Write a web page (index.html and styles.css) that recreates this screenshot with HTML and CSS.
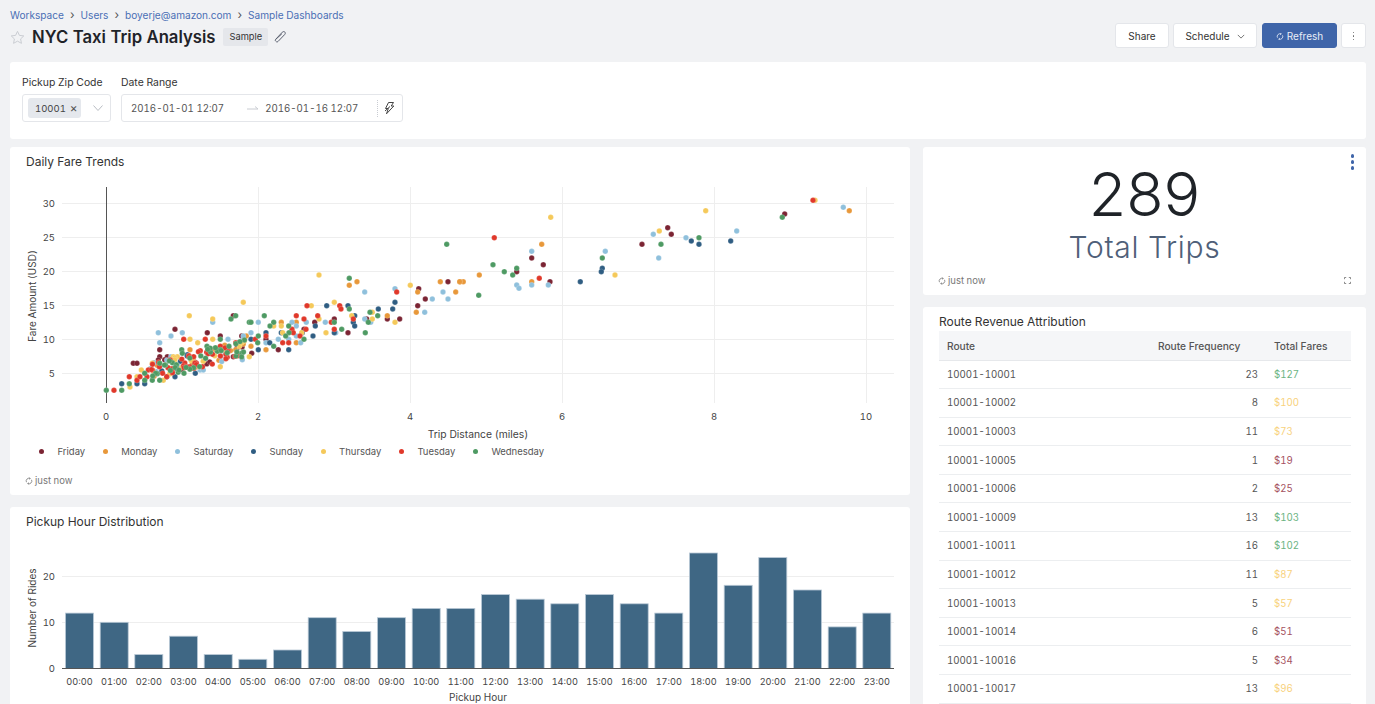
FILE: index.html
```html
<!DOCTYPE html>
<html lang="en">
<head>
<meta charset="utf-8">
<title>NYC Taxi Trip Analysis</title>
<link rel="stylesheet" href="styles.css">
</head>
<body>
<div class="page">
  <header class="top">
    <div class="top-left">
      <nav class="crumbs">
        <a>Workspace</a><span class="sep">›</span><a>Users</a><span class="sep">›</span><a>boyerje@amazon.com</a><span class="sep">›</span><a>Sample Dashboards</a>
      </nav>
      <div class="title-row">
        <svg class="star" viewBox="0 0 16 16"><path d="M8 1.400l2 4.300 4.700.6-3.400 3.200.9 4.700L8 11.900l-4.200 2.300.9-4.700L1.300 6.300l4.700-.6z"/></svg>
        <h1>NYC Taxi Trip Analysis</h1>
        <span class="badge">Sample</span>
        <svg class="pencil" viewBox="0 0 14 14"><path d="M2.500 9.500L9.300 2.200c.8-.8 2-.8 2.600-.1.600.7.500 1.700-.2 2.400L5 11.500c-.5.500-1.100.6-1.500.3l-.9-.8c-.4-.4-.5-1 .1-1.600L8.800 3.900"/></svg>
      </div>
    </div>
    <div class="actions">
      <button class="btn btn-share">Share</button>
      <button class="btn btn-schedule">Schedule<svg class="chev" viewBox="0 0 10 6"><path d="M1 1l4 4 4-4"/></svg></button>
      <button class="btn btn-primary"><svg class="sync sync-white" viewBox="0 0 12 12"><path d="M2.200 7.800A4.100 4.100 0 0 1 7.500 2.200M9.800 4.200A4.100 4.100 0 0 1 4.500 9.800M6.700 .8l1.300 1.500-1.700 1M5.300 11.200L4 9.700l1.700-1"/></svg>Refresh</button>
      <button class="btn btn-more"><span class="vdots"><i></i><i></i><i></i></span></button>
    </div>
  </header>

  <section class="card filters">
    <div class="field">
      <label>Pickup Zip Code</label>
      <div class="control select">
        <span class="chip">10001<span class="chip-x">×</span></span>
        <svg class="chev chev-light" viewBox="0 0 10 6"><path d="M.5.500L5 5.500 9.500.500"/></svg>
      </div>
    </div>
    <div class="field">
      <label>Date Range</label>
      <div class="control range">
        <span class="date">2016-01-01 12:07</span>
        <svg class="arrow" viewBox="0 0 12 6"><path d="M0 4h11L8 1.500"/></svg>
        <span class="date">2016-01-16 12:07</span>
        <span class="divider"></span>
        <svg class="bolt" viewBox="0 0 12 14"><path d="M5.500 1.500h5L8.200 5h2.600L3.500 12.800 5.300 7.500H2.500z"/><path d="M7 5.500L2 10"/></svg>
      </div>
    </div>
  </section>

  <main class="board">
    <div class="col">
      <section class="card chart-card">
        <h2 class="card-title">Daily Fare Trends</h2>
        <svg id="scatter" class="scatter" viewBox="10 175 900 267"></svg>
        <div class="legend">
          <span class="leg"><i class="dot d-fri"></i>Friday</span>
          <span class="leg"><i class="dot d-mon"></i>Monday</span>
          <span class="leg"><i class="dot d-sat"></i>Saturday</span>
          <span class="leg"><i class="dot d-sun"></i>Sunday</span>
          <span class="leg"><i class="dot d-thu"></i>Thursday</span>
          <span class="leg"><i class="dot d-tue"></i>Tuesday</span>
          <span class="leg"><i class="dot d-wed"></i>Wednesday</span>
        </div>
        <div class="stamp"><svg class="sync" viewBox="0 0 12 12"><path d="M2.200 7.800A4.100 4.100 0 0 1 7.500 2.200M9.800 4.200A4.100 4.100 0 0 1 4.500 9.800M6.700 .8l1.300 1.500-1.700 1M5.300 11.200L4 9.700l1.700-1"/></svg>just now</div>
      </section>
      <section class="card bars-card">
        <h2 class="card-title">Pickup Hour Distribution</h2>
        <svg id="bars" class="bars" viewBox="10 535 900 175"></svg>
      </section>
    </div>
    <div class="col">
      <section class="card kpi">
        <span class="vdots vdots-blue"><i></i><i></i><i></i></span>
        <div class="kpi-num">289</div>
        <div class="kpi-label">Total Trips</div>
        <div class="kpi-foot">
          <div class="stamp"><svg class="sync" viewBox="0 0 12 12"><path d="M2.200 7.800A4.100 4.100 0 0 1 7.500 2.200M9.800 4.200A4.100 4.100 0 0 1 4.500 9.800M6.700 .8l1.300 1.500-1.700 1M5.300 11.200L4 9.700l1.700-1"/></svg>just now</div>
          <svg class="expand" viewBox="0 0 8 8"><path d="M.5 2.500v-2h2M5.500.500h2v2M7.500 5.500v2h-2M2.500 7.500h-2v-2"/></svg>
        </div>
      </section>
      <section class="card table-card">
        <h2 class="card-title card-title-tight">Route Revenue Attribution</h2>
        <table class="routes">
          <colgroup><col class="c1"><col class="c2"><col class="c3"></colgroup>
          <thead><tr><th>Route</th><th>Route Frequency</th><th>Total Fares</th></tr></thead>
          <tbody>
            <tr><td>10001-10001</td><td class="num">23</td><td class="good">$127</td></tr>
            <tr><td>10001-10002</td><td class="num">8</td><td class="mid">$100</td></tr>
            <tr><td>10001-10003</td><td class="num">11</td><td class="mid">$73</td></tr>
            <tr><td>10001-10005</td><td class="num">1</td><td class="bad">$19</td></tr>
            <tr><td>10001-10006</td><td class="num">2</td><td class="bad">$25</td></tr>
            <tr><td>10001-10009</td><td class="num">13</td><td class="good">$103</td></tr>
            <tr><td>10001-10011</td><td class="num">16</td><td class="good">$102</td></tr>
            <tr><td>10001-10012</td><td class="num">11</td><td class="mid">$87</td></tr>
            <tr><td>10001-10013</td><td class="num">5</td><td class="mid">$57</td></tr>
            <tr><td>10001-10014</td><td class="num">6</td><td class="bad">$51</td></tr>
            <tr><td>10001-10016</td><td class="num">5</td><td class="bad">$34</td></tr>
            <tr><td>10001-10017</td><td class="num">13</td><td class="mid">$96</td></tr>
          </tbody>
        </table>
      </section>
    </div>
  </main>
</div>
<script src="charts.js"></script>
</body>
</html>
```
FILE: styles.css
```css
* { box-sizing: border-box; }
html, body { margin: 0; height: 704px; overflow: hidden; }
body { background: #f1f2f4; font-family: Inter, "Liberation Sans", sans-serif; font-variant-numeric: tabular-nums; color: #333; }
.page { padding: 0 9px 0 10px; }

.top { display: flex; justify-content: space-between; height: 62px; }
.top-left { display: flex; flex-direction: column; }
.crumbs { display: flex; align-items: center; height: 14px; margin-top: 8px; font-size: 10.100px; color: #4a6fb5; }
.sep { margin: 0 6px; color: #555; font-size: 12px; line-height: 12px; }
.title-row { display: flex; align-items: center; height: 30px; }
.star { width: 15px; height: 15px; margin-right: 7px; fill: none; stroke: #c8cbd0; stroke-width: 1; }
h1 { margin: 0; font-size: 16.700px; font-weight: 600; color: #1f2328; }
.badge { margin-left: 8px; padding: 0 6px; height: 18px; line-height: 18px; background: #e5e7eb; border-radius: 2px; font-size: 9.300px; color: #333; }
.pencil { width: 14px; height: 14px; margin-left: 5px; fill: none; stroke: #5b6170; stroke-width: 1; }

.actions { display: flex; align-items: flex-start; gap: 4px; padding-top: 23px; }
.btn { height: 25px; padding: 1px 0 0; border: 1px solid #e4e6ea; border-radius: 3px; background: #fff; font: 400 10px Inter, "Liberation Sans", sans-serif; color: #333; display: flex; align-items: center; justify-content: center; }
.btn-share { width: 54px; }
.btn-schedule { width: 84px; gap: 7px; }
.btn-primary { width: 75px; margin-left: 1px; gap: 3px; background: #3f65a9; border-color: #3f65a9; color: #e9eef7; }
.btn-more { width: 25px; }
.chev { width: 8px; height: 5px; fill: none; stroke: #555; stroke-width: 1; }
.chev-light { width: 10px; height: 6px; stroke: #b9bdc4; }
.sync { width: 8px; height: 8px; fill: none; stroke: #777; stroke-width: 1.200; }
.sync-white { stroke: #e9eef7; width: 8px; height: 9px; }
.vdots { display: flex; flex-direction: column; gap: 2px; }
.vdots i { width: 1.500px; height: 1.500px; background: #666; border-radius: 50%; }
.vdots-blue { position: absolute; top: 7px; right: 12px; gap: 2.500px; }
.vdots-blue i { width: 3.500px; height: 3.500px; background: #3f65a9; }

.card { background: #fff; border-radius: 3px; }
.filters { display: flex; gap: 10px; height: 77px; padding: 13px 12px 0; margin-bottom: 8px; }
.field { display: flex; flex-direction: column; }
.field label { height: 19px; padding-top: 1px; font-size: 10.400px; line-height: 14px; color: #333; }
.control { display: flex; align-items: center; height: 28px; background: #fff; border: 1px solid #e4e6ea; border-radius: 3px; }
.select { width: 89px; padding: 0 7px 0 5px; justify-content: space-between; }
.chip { display: flex; align-items: center; gap: 4px; width: 53px; height: 20px; padding: 0 6px 0 7px; background: #e5e8ed; border-radius: 3px; font-size: 9.500px; color: #444; }
.chip-x { font-size: 12px; line-height: 12px; color: #555; }
.range { width: 282px; padding: 0 10px 0 9px; font-size: 9.700px; color: #555; }
.date { white-space: nowrap; }
.arrow { flex: none; width: 12px; height: 6px; margin: 0 6px 0 23px; fill: none; stroke: #c9ccd2; stroke-width: 1; }
.divider { margin-left: 19px; height: 17px; border-left: 1px dotted #c9ccd2; }
.bolt { flex: none; width: 12px; height: 14px; margin-left: 5px; fill: none; stroke: #444; stroke-width: 1; }

.board { display: grid; grid-template-columns: 900px 443px; column-gap: 13px; }
.col { display: flex; flex-direction: column; gap: 12px; }
.card-title { margin: 0; height: 28px; padding: 7px 16px 0; font-size: 12px; line-height: 15px; font-weight: 400; color: #333; }
.card-title-tight { height: 24px; }

.chart-card { height: 348px; display: flex; flex-direction: column; }
.scatter { display: block; width: 900px; height: 267px; }
.legend { display: flex; height: 18px; align-items: center; padding-left: 29px; gap: 17.500px; font-size: 9.500px; color: #555; }
.leg { display: flex; align-items: center; }
.dot { width: 5px; height: 5px; border-radius: 50%; margin-right: 13.500px; }
.d-fri { background: #7b2433; }
.d-mon { background: #e8983a; }
.d-sat { background: #8fc0dc; }
.d-sun { background: #2f5d82; }
.d-thu { background: #f5c95a; }
.d-tue { background: #e0382a; }
.d-wed { background: #4e9a63; }
.stamp { display: flex; align-items: center; gap: 2px; font-size: 9.500px; color: #777; }
.chart-card .stamp { margin-top: auto; padding: 0 0 9px 15px; }

.bars-card { height: 210px; overflow: hidden; }
.bars { display: block; width: 900px; height: 175px; }

.kpi { position: relative; height: 148px; display: flex; flex-direction: column; align-items: center; padding-top: 11px; }
.kpi-num { font-size: 61px; line-height: 72px; font-weight: 300; font-variant-numeric: normal; color: #1f2328; }
.kpi-label { font-size: 30px; line-height: 34px; font-weight: 300; color: #4f6079; letter-spacing: .7px; }
.kpi-foot { margin-top: auto; align-self: stretch; display: flex; justify-content: space-between; align-items: center; padding: 0 15px 9px 15px; }
.expand { width: 7px; height: 7px; fill: none; stroke: #777; stroke-width: 1; }

.table-card { height: 400px; }
.routes { width: 412px; margin-left: 16px; border-collapse: collapse; table-layout: fixed; font-size: 9.700px; color: #555; }
.c1 { width: 211px; }
.c2 { width: 116px; }
.c3 { width: 85px; }
.routes th { height: 29px; padding: 1px 8px 0; text-align: left; font-size: 10.200px; font-weight: 500; background: #f5f6f8; border-bottom: 1px solid #e6e8eb; color: #555; }
.routes td { height: 28.600px; padding: 0 8px; border-bottom: 1px solid #eceef0; }
.routes .num { text-align: right; }
.good { color: #6bb482; }
.mid { color: #f8d27d; }
.bad { color: #a5525f; }
```
FILE: charts.js
```js
(function () {
  var COLORS = { F: '#7b2433', M: '#e8983a', A: '#8fc0dc', S: '#2f5d82', H: '#f5c95a', T: '#e0382a', W: '#4e9a63' };
  var ORDER = 'FMASHTW';

  // coordinates read off the chart: right half (offset 460,170), left half (offset 0,140), at 3x
  var RIGHT = 'T103,203 H272,142 A215,244 M245,223 F215,264 W99,284 F250,284 W170,295 F170,305 W133,305 W158,315 M58,315 T238,325 M215,335 F270,335 A170,345 A177,355 A215,345 A265,345 M10,335 M0,335 W56,376 S361,335 A436,244 W427,264 S427,295 S424,305 H465,315 F546,223 A580,193 H598,183 F623,173 F634,193 W603,223 A596,264 A678,203 S694,213 W717,203 S717,223 H737,122 S812,213 A830,183 W967,142 F974,132 H1065,91 T1059,91 A1150,112 M1168,122';
  var LEFT = 'W1340,313 H957,405 W1048,415 M1048,436 M1071,425 A1094,456 A1185,446 T1190,456 H1231,436 F1256,446 M1253,456 F1276,477 A1297,477 F1253,497 M1321,425 F1344,425 M1379,425 A1329,456 A1344,477 M1367,456 M1249,517 A1274,517 S1185,487 S1178,507 S1135,507 F1199,537 H1185,547 M1162,527 F1162,537 W1133,527 W1110,517 H1117,517 H1117,537 A1094,537 F1100,537 W1105,547 A1112,547 W1096,578 S1064,527 H1055,527 W1048,507 S1044,497 T1019,497 T1023,507 H1003,487 S980,497 T921,497 H934,497 F1003,537 W1003,547 T994,547 H957,537 T953,527 F944,547 S946,558 T889,527 T912,537 A919,547 H730,487 H568,527 H638,537 A638,547 W693,537 F700,527 W707,527 W793,527 W748,547 W753,547 A775,547 W821,547 M844,547 A876,547 M889,547 A889,558 W866,558 W810,558 H821,558 H844,558 S844,578 H848,578 T876,568 W867,578 H905,578 S798,578 A753,578 T880,578 F912,568 T918,568 S907,578 A889,588 W857,588 T900,588 S939,588 H978,578 A976,547 S1003,578 T1003,568 A1007,578 W1025,568 F1044,578 S1060,547 S1064,558 T1060,537 ' +
    'F798,598 T798,588 W775,588 M739,588 T766,598 A730,598 S753,598 A684,598 W661,598 F661,588 H638,598 H570,598 T551,598 A547,578 A475,578 F525,568 F622,578 A513,588 A479,608 F479,629 W545,629 W547,640 M570,629 H593,608 T616,598 T661,619 W661,629 W621,619 A730,588 T707,608 A798,608 W821,619 A835,598 T848,608 T866,608 M889,608 A902,608 W912,598 A866,598 S809,608 W773,608 M753,619 M730,612 F725,588 S775,629 M798,629 F835,629 S866,629 F755,640 W725,640 F700,650 T684,629 W687,619 M707,629 H748,650 A727,659 ' +
    'W319,751 T342,751 W365,751 S365,731 H390,741 W388,731 T388,710 F400,670 F411,670 T411,721 S411,731 H424,690 H411,710 T420,710 S434,731 W434,721 W434,700 T441,710 T445,690 H457,670 W457,721 T457,690 F479,650 F475,660 W479,670 W479,721 S500,710 T500,710 S525,710 H490,721 A513,650 F502,650 H520,650 H532,650 W552,700 S586,700 A600,690 A610,690 H661,680 H593,680 T570,680';

  var pts = [];
  function add(list, ox, oy) {
    list.split(' ').forEach(function (s) {
      if (!s) return;
      var xy = s.slice(1).split(',');
      pts.push({ d: s[0], x: ox + xy[0] / 3, y: oy + xy[1] / 3 });
    });
  }
  add(RIGHT, 460, 170);
  add(LEFT, 0, 140);

  // the dense cluster near the origin
  var seed = 4177;
  function rnd() { seed = (seed * 1103 + 12345) % 65536; return seed / 65536; }
  var mix = 'TTWWTWFSHAMHTW';
  for (var i = 0; i < 125; i++) {
    var px = 150 + rnd() * 95;
    var py = 371 - (px - 150) * 0.24 + (rnd() - 0.5) * 17;
    pts.push({ d: mix[Math.floor(rnd() * mix.length)], x: px, y: py });
  }
  pts.sort(function (a, b) { return ORDER.indexOf(a.d) - ORDER.indexOf(b.d); });

  function line(x1, y1, x2, y2, c) {
    return '<line x1="' + x1 + '" y1="' + y1 + '" x2="' + x2 + '" y2="' + y2 + '" stroke="' + c + '"/>';
  }
  function text(x, y, s, anchor, size, extra) {
    return '<text x="' + x + '" y="' + y + '" text-anchor="' + (anchor || 'middle') + '" font-family="Inter, Liberation Sans, sans-serif" font-size="' + (size || 10) + '" fill="#444"' + (extra || '') + '>' + s + '</text>';
  }

  var GRID = '#eeeeee', AXIS = '#555555', h = '';
  [203.5, 237.5, 271.5, 305.5, 339.5, 373.5].forEach(function (y, i) {
    h += line(62, y, 894, y, GRID);
    h += text(55, y + 3.5, 30 - i * 5, 'end', 9.5);
  });
  [258.5, 410.5, 562.5, 714.5, 866.5].forEach(function (x) { h += line(x, 187, x, 403, GRID); });
  h += line(106.5, 187, 106.5, 403, AXIS);
  [0, 2, 4, 6, 8, 10].forEach(function (v, i) { h += text(106 + i * 152, 419.5, v, 'middle', 9.5); });
  h += text(478, 437.5, 'Trip Distance (miles)', 'middle', 10.3);
  h += text(0, 0, 'Fare Amount (USD)', 'middle', 10, ' transform="translate(36 296) rotate(-90)"');
  pts.forEach(function (p) {
    h += '<circle cx="' + p.x.toFixed(1) + '" cy="' + p.y.toFixed(1) + '" r="2.7" fill="' + COLORS[p.d] + '" stroke="#fff" stroke-opacity=".35" stroke-width=".5"/>';
  });
  document.getElementById('scatter').innerHTML = h;

  var vals = [12, 10, 3, 7, 3, 2, 4, 11, 8, 11, 13, 13, 16, 15, 14, 16, 14, 12, 25, 18, 24, 17, 9, 12];
  var b = line(62, 576.5, 894, 576.5, GRID) + line(62, 622.5, 894, 622.5, GRID);
  b += text(55, 580, 20, 'end', 9.5) + text(55, 626, 10, 'end', 9.5) + text(55, 672, 0, 'end', 9.5);
  vals.forEach(function (v, i) {
    var x = 65.5 + i * 34.667, t = 668.5 - v * 4.62;
    b += '<rect x="' + x.toFixed(1) + '" y="' + t.toFixed(1) + '" width="28" height="' + (v * 4.62).toFixed(1) + '" fill="#3f6784" stroke="#b9c9d6" stroke-width=".8"/>';
    b += text((x + 14).toFixed(1), 685, (i < 10 ? '0' : '') + i + ':00', 'middle', 9.2);
  });
  b += line(62, 668.5, 894, 668.5, AXIS);
  b += text(478, 701, 'Pickup Hour');
  b += text(0, 0, 'Number of Rides', 'middle', 10, ' transform="translate(36 608) rotate(-90)"');
  document.getElementById('bars').innerHTML = b;
})();
```
